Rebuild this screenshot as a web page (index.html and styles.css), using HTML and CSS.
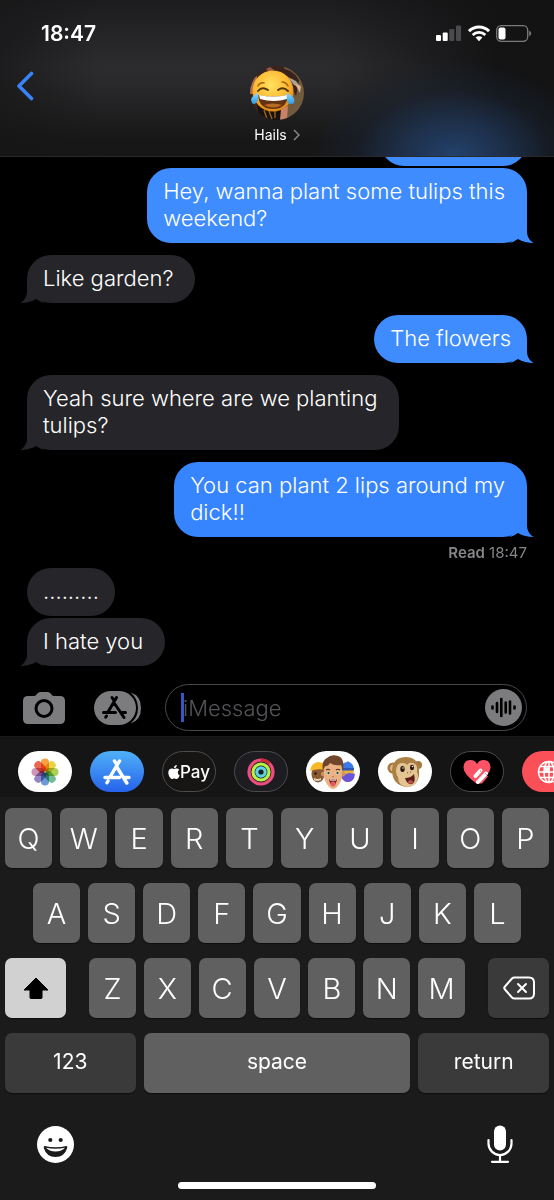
FILE: index.html
```html
<!DOCTYPE html>
<html lang="en">
<head>
    <meta charset="UTF-8">
    <meta name="viewport" content="width=device-width, initial-scale=1.0">
    <title>Messages - Hails</title>
    <link rel="stylesheet" href="styles.css">
</head>
<body>
    <header class="header">
        <div class="status-bar">
            <span class="time">18:47</span>
            <div class="status-icons">
                <svg width="26" height="17" viewBox="0 0 26 17">
                    <rect x="0" y="10" width="5" height="6" rx="1" fill="#fff"/>
                    <rect x="6.700" y="7.500" width="5" height="8.500" rx="1" fill="#fff"/>
                    <rect x="13.300" y="4" width="5" height="12" rx="1" fill="#4a4a4c"/>
                    <rect x="20" y="0.500" width="5" height="15.500" rx="1" fill="#4a4a4c"/>
                </svg>
                <svg width="22" height="17" viewBox="0 0 22 17">
                    <path d="M1 6.200a14.200 14.200 0 0 1 20 0" fill="none" stroke="#fff" stroke-width="3"/>
                    <path d="M4.700 10a9 9 0 0 1 12.600 0" fill="none" stroke="#fff" stroke-width="2.800"/>
                    <path d="M11 16.300l-3.400-3.700a4.800 4.800 0 0 1 6.800 0z" fill="#fff"/>
                </svg>
                <svg width="36" height="17" viewBox="0 0 36 17">
                    <rect x="0.700" y="0.700" width="31" height="15.600" rx="4.500" fill="none" stroke="#7b7b7d" stroke-width="1.300"/>
                    <rect x="2.500" y="2.500" width="7" height="12" rx="2" fill="#fff"/>
                    <path d="M33.200 5.800q2 .8 2 2.700t-2 2.700z" fill="#7b7b7d"/>
                </svg>
            </div>
        </div>
        <div class="nav">
            <button class="back" type="button" aria-label="Back">
                <svg width="18" height="30" viewBox="0 0 18 30">
                    <path d="M15.500 2.500L3 15L15.500 27.500" fill="none" stroke="#3a83f7" stroke-width="3.600" stroke-linecap="round" stroke-linejoin="round"/>
                </svg>
            </button>
            <button class="contact" type="button">
                <svg class="avatar" width="54" height="54" viewBox="0 0 54 54">
                    <defs>
                        <clipPath id="round"><circle cx="27" cy="27" r="27"/></clipPath>
                        <radialGradient id="face" cx=".45" cy=".35" r=".65">
                            <stop offset="0" stop-color="#ffe25e"/>
                            <stop offset=".65" stop-color="#fbb731"/>
                            <stop offset="1" stop-color="#e08416"/>
                        </radialGradient>
                        <linearGradient id="tear" x1="0" y1="0" x2="0" y2="1">
                            <stop offset="0" stop-color="#8bd8fa"/>
                            <stop offset="1" stop-color="#2e9be6"/>
                        </linearGradient>
                    </defs>
                    <g clip-path="url(#round)">
                        <rect width="54" height="54" fill="#3a241b"/>
                        <path d="M34 0h20v54H30z" fill="#715b3f"/>
                        <path d="M28 2q14 0 21 12l-3 16-8-14z" fill="#392219"/>
                        <path d="M38 11l8 4 5 7-7-3z" fill="#aaa198"/>
                        <path d="M16 3l4-2 4 3-5 2z" fill="#9a5544"/>
                        <path d="M45 18l6 2-1 7z" fill="#ddb18d"/>
                        <path d="M0 14l7-4v18H0z" fill="#ad6e4f"/>
                        <path d="M7 38h25v16H10z" fill="#17110f"/>
                        <path d="M31 43l7-3-1 12-7 2z" fill="#c98268"/>
                        <path d="M14 44l3 9M19 45l3 8M25 45v7" stroke="#985d24" stroke-width="1.500"/>
                        <circle cx="23" cy="25" r="20.500" fill="url(#face)"/>
                        <path d="M8 25q4-5 10-1M28 24q5-4 10 1" fill="none" stroke="#58350d" stroke-width="2" stroke-linecap="round"/>
                        <path d="M8 20q2-4 6-3M32 16q4 0 6 4" fill="none" stroke="#a4650d" stroke-width="1.500" stroke-linecap="round"/>
                        <path d="M8 29q15 3 30 0q-1 14-15 14T8 29z" fill="#633213"/>
                        <path d="M9 29q14 3 28 0v4q-13 4-27 0z" fill="#fff"/>
                        <path d="M14 39q9-3 18 0q-9 5-18 0z" fill="#b96a22"/>
                        <path d="M8 27q-8 4-7 9q3 4 6 0q2-3 1-9z" fill="url(#tear)"/>
                        <path d="M37 27q9 4 7 10q-3 2-6 0q-2-4-1-10z" fill="url(#tear)"/>
                    </g>
                </svg>
                <span class="name">Hails
                    <svg width="7" height="12" viewBox="0 0 7 12">
                        <path d="M1 1l5 5-5 5" fill="none" stroke="#8e8e93" stroke-width="1.400"/>
                    </svg>
                </span>
            </button>
        </div>
    </header>

    <main class="messages">
        <div class="bubble sent cut"></div>
        <div class="bubble sent tail multi">Hey, wanna plant some tulips this<br>weekend?</div>
        <div class="bubble received tail">Like garden?</div>
        <div class="bubble sent tail">The flowers</div>
        <div class="bubble received tail">Yeah sure where are we planting<br>tulips?</div>
        <div class="bubble sent tail multi deep">You can plant 2 lips around my<br>dick!!</div>
        <p class="receipt"><b>Read</b> 18:47</p>
        <div class="bubble received group">.........</div>
        <div class="bubble received tail">I hate you</div>
    </main>

    <form class="composer">
        <button class="tool" type="button" aria-label="Camera">
            <svg width="42" height="32" viewBox="0 0 42 32">
                <path d="M5 4h6q1.500 0 2.500-1.500Q15 0 17 0h8q2 0 3.500 2.500Q29.500 4 31 4h6q5 0 5 5v18q0 5-5 5H5q-5 0-5-5V9q0-5 5-5z" fill="#7c7c7e"/>
                <circle cx="21" cy="16.500" r="8" fill="none" stroke="#000" stroke-width="3"/>
            </svg>
        </button>
        <button class="tool" type="button" aria-label="Apps">
            <svg width="47" height="34" viewBox="0 0 47 34">
                <path d="M36.500 1.500q10.500 3 10.500 15.500T36.500 32.500q7.500-6 7.500-15.500T36.500 1.500z" fill="#7c7c7e"/>
                <rect width="42" height="34" rx="17" fill="#7c7c7e"/>
                <g fill="none" stroke="#000" stroke-width="3" stroke-linecap="round">
                    <path d="M18 6.500l2 3M22.500 6.500L14 21M20.500 12.500l9.500 14M9.500 21.500h12M28 21.500h3.500M12.500 25l-.8 1.200"/>
                </g>
            </svg>
        </button>
        <div class="field">
            <input type="text" placeholder="iMessage" aria-label="iMessage">
            <span class="caret"></span>
            <button class="audio" type="button" aria-label="Record audio">
                <svg width="37" height="37" viewBox="0 0 37 37">
                    <circle cx="18.500" cy="18.500" r="18.500" fill="#7c7c7e"/>
                    <path d="M7.500 17.500v2M12 14v9M16.300 10v17M20.700 13.500v10M25 12.500v12M29.500 17.500v2" stroke="#000" stroke-width="2.600" stroke-linecap="round"/>
                </svg>
            </button>
        </div>
    </form>

    <nav class="apps">
        <button class="app white" type="button" aria-label="Photos">
            <svg width="28" height="28" viewBox="-14 -14 28 28">
                <g class="petals">
                    <rect x="-4" y="-13.500" width="8" height="13" rx="4" fill="#f5962a"/>
                    <rect x="-4" y="-13.500" width="8" height="13" rx="4" fill="#e8cf2c" transform="rotate(45)"/>
                    <rect x="-4" y="-13.500" width="8" height="13" rx="4" fill="#a5c944" transform="rotate(90)"/>
                    <rect x="-4" y="-13.500" width="8" height="13" rx="4" fill="#5fb584" transform="rotate(135)"/>
                    <rect x="-4" y="-13.500" width="8" height="13" rx="4" fill="#5b8fd0" transform="rotate(180)"/>
                    <rect x="-4" y="-13.500" width="8" height="13" rx="4" fill="#8a78bd" transform="rotate(225)"/>
                    <rect x="-4" y="-13.500" width="8" height="13" rx="4" fill="#c98ab0" transform="rotate(270)"/>
                    <rect x="-4" y="-13.500" width="8" height="13" rx="4" fill="#ea5542" transform="rotate(315)"/>
                </g>
            </svg>
        </button>
        <button class="app store" type="button" aria-label="App Store">
            <svg width="28" height="26" viewBox="0 0 28 26">
                <path d="M11.500 2l2 3M16.500 2L7 18M13.800 8l10 16M2 18.500h14.500M21.500 18.500h4.500M5 22l-1 1.700" fill="none" stroke="#fff" stroke-width="3.400" stroke-linecap="round"/>
            </svg>
        </button>
        <button class="app pay" type="button">
            <svg width="12" height="14" viewBox="2 0 20 24">
                <path fill="#fff" d="M12.152 6.896c-.948 0-2.415-1.078-3.960-1.040-2.040.027-3.910 1.183-4.961 3.014-2.117 3.675-.546 9.103 1.519 12.090 1.013 1.454 2.208 3.090 3.792 3.039 1.520-.065 2.090-.987 3.935-.987 1.831 0 2.350.987 3.960.948 1.637-.026 2.676-1.480 3.676-2.948 1.156-1.688 1.636-3.325 1.662-3.415-.039-.013-3.182-1.221-3.220-4.857-.026-3.040 2.480-4.494 2.597-4.559-1.429-2.090-3.623-2.324-4.390-2.376-2-.156-3.675 1.090-4.610 1.090zM15.530 3.830c.843-1.012 1.400-2.427 1.245-3.830-1.207.052-2.662.805-3.532 1.818-.780.896-1.454 2.338-1.273 3.714 1.338.104 2.715-.688 3.559-1.701"/>
            </svg>Pay
        </button>
        <button class="app dark" type="button" aria-label="Fitness">
            <svg width="28" height="28" viewBox="0 0 28 28" fill="none" stroke-width="3.200">
                <circle cx="14" cy="14" r="12" stroke="#ee4b7e"/>
                <path d="M14 2a12 12 0 0 1 8.500 3.500" stroke="#cc2b35"/>
                <circle cx="14" cy="14" r="8" stroke="#b8f04a"/>
                <circle cx="14" cy="14" r="4.200" stroke="#5bd5e4"/>
            </svg>
        </button>
        <button class="app white" type="button" aria-label="Memoji">
            <svg width="48" height="36" viewBox="0 0 48 36">
                <ellipse cx="9" cy="20" rx="6.500" ry="8.500" fill="#8a5a33"/>
                <path d="M1 17q1-8 8-9 6 0 7 4v4q-7-2-15 1z" fill="#f7b928"/>
                <circle cx="6.500" cy="19.500" r="1.200" fill="#24140a"/>
                <path d="M5 24q4 2 7 0v2q-4 2-7 0z" fill="#e8d0c0"/>
                <ellipse cx="38.500" cy="20" rx="6.500" ry="8" fill="#e6b23c"/>
                <path d="M31 16q0-7 7-8l1-1 1 1q5 2 5 8z" fill="#3a7be8"/>
                <path d="M32 22l8-3 6 1q-1 8-7 8-5 0-7-6z" fill="#6b54d8"/>
                <path d="M31 14h14v2.500H31z" fill="#2e55b8"/>
                <circle cx="14.500" cy="20" r="2.500" fill="#d28f64"/>
                <circle cx="33.500" cy="20" r="2.500" fill="#d28f64"/>
                <path d="M15 13q0-6 9-6t9 6v9q0 5-5 11-4 4-8 0-5-6-5-11z" fill="#eab184"/>
                <path d="M14 17q-2-10 4-13 4-4 11-2 7 2 5 15l-2-6q-7 1-11-2-2 4-5 3z" fill="#70452b"/>
                <path d="M17 16q2-1.500 4 0M27 16q2-1.500 4 0" fill="none" stroke="#55301b" stroke-width="1.200"/>
                <ellipse cx="19.500" cy="19" rx="1.900" ry="1.600" fill="#fff"/>
                <ellipse cx="28.500" cy="19" rx="1.900" ry="1.600" fill="#fff"/>
                <circle cx="19.500" cy="19" r="1.200" fill="#34452e"/>
                <circle cx="28.500" cy="19" r="1.200" fill="#34452e"/>
                <path d="M23 22.500q1 1 2 0" fill="none" stroke="#b87851"/>
                <path d="M20 25.500q4-1 8 0-1 6-4 6t-4-6z" fill="#7d2825"/>
                <path d="M21 25.500h6v1h-6z" fill="#fff"/>
                <ellipse cx="24" cy="30" rx="2.500" ry="2.500" fill="#e65b63"/>
            </svg>
        </button>
        <button class="app white" type="button" aria-label="Animoji">
            <svg width="36" height="34" viewBox="0 0 36 34">
                <circle cx="6" cy="13" r="5.500" fill="#a4793e"/>
                <circle cx="6.500" cy="13" r="3.500" fill="#e0b384"/>
                <circle cx="31" cy="10" r="4" fill="#a4793e"/>
                <path d="M5 17Q5 2 19 2q12 0 13 13 1 9-4 14-6 5-13 2Q6 28 5 17z" fill="#aa8044"/>
                <path d="M9 15q1-8 7-7 3 0 4 2 2-3 6-2 5 1 4 9 2 4 0 9-3 6-10 6-9-1-9-10-2-2-2-7z" fill="#e4c493"/>
                <ellipse cx="15.500" cy="14" rx="2.200" ry="3" fill="#28160c"/>
                <ellipse cx="25" cy="12.500" rx="2" ry="2.800" fill="#28160c"/>
                <circle cx="16" cy="13" r=".8" fill="#fff"/>
                <circle cx="25.500" cy="11.500" r=".8" fill="#fff"/>
                <path d="M20 17.500l1 .5M23 17.200l1-.2" stroke="#7b512f"/>
                <path d="M18 23q6 0 9-4 2 8-2 10-5 1-7-6z" fill="#5a201b"/>
                <ellipse cx="23.500" cy="27" rx="2.500" ry="1.800" fill="#c6544f"/>
            </svg>
        </button>
        <button class="app black" type="button" aria-label="Digital Touch">
            <svg width="28" height="26" viewBox="0 0 28 26">
                <path d="M14 25Q0 15 0.500 8 1 1 7.500 1q4.500 0 6.500 4 2-4 6.500-4Q27 1 27.500 8 28 15 14 25z" fill="#fb5266"/>
                <path d="M18 10.500L25 17.500L19 24.500H15L10 19z" fill="#fb5266"/>
                <path d="M17.500 11.500l-5 5.500M23 14.500l-8 8.500" stroke="#fff" stroke-width="4" stroke-linecap="round"/>
                <path d="M16.800 11.400l1.400 1.200M22.300 14.400l1.400 1.200" stroke="#fb5266" stroke-width="1"/>
            </svg>
        </button>
        <button class="app red" type="button" aria-label="Images">
            <svg width="24" height="24" viewBox="0 0 24 24" fill="none" stroke="#fff" stroke-width="1.500">
                <circle cx="12" cy="12" r="10.500"/>
                <ellipse cx="12" cy="12" rx="5" ry="10.500"/>
                <path d="M12 1.500v21M1.500 12h21M3 6.500h18M3 17.500h18"/>
                <path d="M8 8h4v4H8z" fill="#fff"/>
            </svg>
        </button>
    </nav>

    <section class="keyboard">
        <div class="row">
            <button class="key" type="button">Q</button>
            <button class="key" type="button">W</button>
            <button class="key" type="button">E</button>
            <button class="key" type="button">R</button>
            <button class="key" type="button">T</button>
            <button class="key" type="button">Y</button>
            <button class="key" type="button">U</button>
            <button class="key" type="button">I</button>
            <button class="key" type="button">O</button>
            <button class="key" type="button">P</button>
        </div>
        <div class="row middle">
            <button class="key" type="button">A</button>
            <button class="key" type="button">S</button>
            <button class="key" type="button">D</button>
            <button class="key" type="button">F</button>
            <button class="key" type="button">G</button>
            <button class="key" type="button">H</button>
            <button class="key" type="button">J</button>
            <button class="key" type="button">K</button>
            <button class="key" type="button">L</button>
        </div>
        <div class="row split">
            <button class="key shift" type="button" aria-label="Shift">
                <svg width="26" height="22" viewBox="0 0 26 22">
                    <path d="M13 1L25 13H19V20.500q0 1-1 1H8q-1 0-1-1V13H1z" fill="#000" stroke="#000" stroke-linejoin="round"/>
                </svg>
            </button>
            <div class="row letters">
                <button class="key" type="button">Z</button>
                <button class="key" type="button">X</button>
                <button class="key" type="button">C</button>
                <button class="key" type="button">V</button>
                <button class="key" type="button">B</button>
                <button class="key" type="button">N</button>
                <button class="key" type="button">M</button>
            </div>
            <button class="key delete" type="button" aria-label="Delete">
                <svg width="32" height="24" viewBox="0 0 32 24" fill="none" stroke="#fff" stroke-width="2" stroke-linecap="round" stroke-linejoin="round">
                    <path d="M11.500 1.500H26q5 0 5 5v11q0 5-5 5H11.500q-1.500 0-2.500-1L2 13.500q-1.500-1.500 0-3L9 2.500q1-1 2.500-1z"/>
                    <path d="M15 8l8 8M23 8l-8 8"/>
                </svg>
            </button>
        </div>
        <div class="row bottom">
            <button class="key word numbers" type="button">123</button>
            <button class="key word" type="button">space</button>
            <button class="key word return" type="button">return</button>
        </div>
        <div class="dock">
            <button class="plain" type="button" aria-label="Emoji">
                <svg width="37" height="37" viewBox="0 0 37 37">
                    <circle cx="18.500" cy="18.500" r="18.500" fill="#fff"/>
                    <circle cx="13.300" cy="14" r="2.100" fill="#1b1b1b"/>
                    <circle cx="23.700" cy="14" r="2.100" fill="#1b1b1b"/>
                    <path d="M7.500 20q11 2.500 22 0 1 0 .7 2-2.700 9-11.700 9T6.800 22q-.3-2 .7-2z" fill="#1b1b1b"/>
                    <path d="M9 21.800q9.500 2 19 0-3 3.700-9.500 3.700T9 21.800z" fill="#fff"/>
                </svg>
            </button>
            <button class="plain" type="button" aria-label="Dictate">
                <svg width="26" height="39" viewBox="0 0 26 39">
                    <rect x="7" y="0.500" width="12" height="25" rx="6" fill="#fff"/>
                    <path d="M1.500 15v3.500a11.500 11.500 0 0 0 23 0V15M13 30.500v6M5 36.800h16" fill="none" stroke="#fff" stroke-width="2.200" stroke-linecap="round"/>
                </svg>
            </button>
        </div>
        <div class="home-bar"></div>
    </section>
</body>
</html>
```
FILE: styles.css
```css
*{
    margin: 0;
    padding: 0;
    box-sizing: border-box;
}
body{
    background-color: #000;
    color: #fff;
    font-family: Inter, "Liberation Sans", sans-serif;
    overflow-x: hidden;
}
button{
    border: none;
    background: none;
    color: inherit;
    font-family: inherit;
    cursor: pointer;
}
svg{
    display: block;
    flex-shrink: 0;
}

/* header */
.header{
    height: 157px;
    border-bottom: 1px solid #29292b;
    background:
        radial-gradient(ellipse 140px 95px at 82% 100%, rgba(36, 68, 112, 0.95), rgba(34, 60, 98, 0.7) 35%, rgba(28, 44, 68, 0.3) 70%, transparent),
        linear-gradient(90deg, rgba(22, 22, 23, 0.7), transparent 18%, transparent 60%, rgba(18, 18, 19, 0.95) 90%),
        linear-gradient(#1c1c1e, #2c2c2f 42%, #2a2a2c 52%, #171718 90%);
}
.status-bar{
    display: flex;
    align-items: center;
    justify-content: space-between;
    height: 66px;
    padding: 0 22px 0 41px;
}
.time{
    font-size: 21px;
    font-weight: 600;
}
.status-icons{
    display: flex;
    gap: 6px;
}
.nav{
    display: grid;
    grid-template-columns: 1fr auto 1fr;
    align-items: start;
}
.back{
    justify-self: start;
    padding: 5px 16px;
}
.contact{
    display: flex;
    flex-direction: column;
    align-items: center;
}
.name{
    display: flex;
    align-items: center;
    gap: 6px;
    font-size: 14px;
    line-height: 30px;
}

/* messages */
.messages{
    display: flex;
    flex-direction: column;
    gap: 12px;
    padding: 0 27px;
    overflow: hidden;
}
.bubble{
    position: relative;
    min-height: 48px;
    padding: 10px 16px 11px;
    border-radius: 24px;
    font-size: 22px;
    font-weight: 350;
    line-height: 27px;
}
.multi,.received.tail{
    padding-right: 22px;
}
.sent{
    align-self: flex-end;
    background-color: #3f8cfe;
}
.deep{
    background-color: #3785fe;
}
.received{
    align-self: flex-start;
    background-color: #26262a;
}
.cut{
    width: 147px;
    margin-top: -39px;
    margin-bottom: -10px;
}
.group{
    margin-bottom: -10px;
}
.tail::after{
    content: "";
    position: absolute;
    right: -7px;
    bottom: 0;
    width: 25px;
    height: 24px;
    background-color: inherit;
    clip-path: path("M16 0H18V12C18 18 21 22 25 24C19 24 13 22.5 9 20Q5 23 0 24L9 18Z");
}
.received.tail::after{
    right: auto;
    left: -7px;
    transform: scaleX(-1);
}
.receipt{
    align-self: flex-end;
    margin: -12px 0;
    color: #85858a;
    font-size: 15px;
    line-height: 31px;
}
.receipt b{
    font-weight: 600;
}

/* composer */
.composer{
    display: flex;
    align-items: center;
    gap: 24px;
    padding: 18px 27px 5px 23px;
}
.tool{
    flex: none;
    width: 47px;
}
.field{
    position: relative;
    display: flex;
    align-items: center;
    flex: 1;
    min-width: 0;
    height: 47px;
    padding: 0 4px 0 17px;
    border: 1px solid #48484b;
    border-radius: 24px;
}
.field input{
    flex: 1;
    min-width: 0;
    border: none;
    outline: none;
    background: none;
    color: #fff;
    font-family: inherit;
    font-size: 22px;
    font-weight: 350;
}
.field input::placeholder{
    color: #545458;
}
.caret{
    position: absolute;
    left: 15px;
    width: 3px;
    height: 29px;
    background-color: #3457c4;
}

/* app strip */
.apps{
    display: flex;
    gap: 18px;
    padding: 14px 0 5px 18px;
    border-top: 1px solid #1b191b;
    background-color: #151515;
    overflow: hidden;
}
.app{
    display: flex;
    align-items: center;
    justify-content: center;
    flex: none;
    width: 54px;
    height: 41px;
    border-radius: 21px;
}
.white{
    background-color: #fff;
}
.petals rect{
    mix-blend-mode: multiply;
    opacity: 0.9;
}
.store{
    background: linear-gradient(#4fb0f8, #2663ea);
}
.pay,.dark,.black{
    border: 1px solid #4d4b4c;
}
.pay{
    background-color: #171514;
    font-size: 17px;
    font-weight: 500;
}
.dark{
    background-color: #1d1d21;
}
.black{
    background-color: #000;
}
.red{
    background-color: #fb5058;
}

/* keyboard */
.keyboard{
    padding: 11px 5px;
    background-color: #1b1b1b;
}
.row{
    display: flex;
    gap: 8px;
    margin-bottom: 15px;
}
.middle{
    padding: 0 28px;
}
.split{
    gap: 23px;
}
.letters{
    flex: 1;
    margin-bottom: 0;
}
.key{
    display: flex;
    align-items: center;
    justify-content: center;
    flex: 1;
    min-width: 0;
    height: 60px;
    border-radius: 7px;
    background-color: #606060;
    box-shadow: 0 1px 1px rgba(0, 0, 0, 0.5);
    font-size: 29px;
    font-weight: 350;
}
.shift,.delete{
    flex: 0 0 61px;
}
.shift{
    background-color: #d1d1d1;
}
.delete,.numbers,.return{
    background-color: #3a3a3a;
}
.word{
    padding-bottom: 3px;
    font-size: 21px;
    font-weight: 400;
}
.numbers,.return{
    flex: 0 0 24%;
}
.dock{
    display: flex;
    justify-content: space-between;
    align-items: center;
    padding: 17px 36px 18px 32px;
}
.home-bar{
    width: 198px;
    height: 7px;
    margin: 0 auto;
    border-radius: 4px;
    background-color: #fff;
}
```
